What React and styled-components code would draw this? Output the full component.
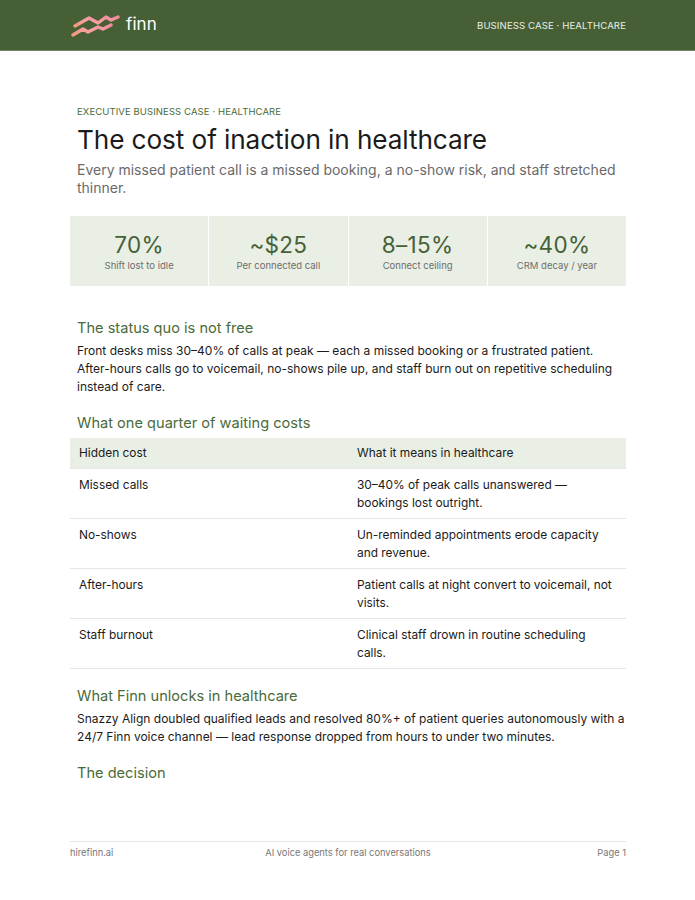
import React from "react";
import styled, { createGlobalStyle } from "styled-components";

const Global = createGlobalStyle`
  html, body { margin: 0; padding: 0; background: #fff; }
  body { font-family: Inter, "Noto Sans", sans-serif; color: #1a1a1a; -webkit-font-smoothing: antialiased; }
  * { box-sizing: border-box; }
`;

const Page = styled.div`
  width: 695px;
  height: 900px;
  display: flex;
  flex-direction: column;
  overflow: hidden;
`;

const Header = styled.header`
  height: 51px;
  background: #465f35;
  border-bottom: 1px solid #6f8662;
  display: flex;
  align-items: center;
  justify-content: space-between;
  padding: 0 69px 0 70px;
`;

const Brand = styled.div`
  display: flex;
  align-items: center;
  gap: 6px;
`;

const BrandName = styled.span`
  color: #fff;
  font-size: 17px;
  font-weight: 400;
  letter-spacing: 0.1px;
  margin-top: -2px;
`;

const HeaderTag = styled.span`
  color: #e9eee4;
  font-size: 9.6px;
  letter-spacing: 0.1px;
`;

const Main = styled.main`
  padding: 0 69px 0 70px;
  flex: 1;
  display: flex;
  flex-direction: column;
`;

const Kicker = styled.div`
  margin-top: 55px;
  padding: 0 7px;
  font-size: 9.5px;
  color: #4a6b3a;
  letter-spacing: 0.1px;
`;

const Title = styled.h1`
  margin: 6px 0 0;
  padding: 0 7px;
  font-size: 26.2px;
  font-weight: 400;
  line-height: 34px;
  color: #1b1b1b;
  letter-spacing: -0.1px;
`;

const Subtitle = styled.p`
  margin: 4px 0 0;
  padding: 0 7px;
  font-size: 14px;
  line-height: 18px;
  color: #6a6a6a;
`;

const Stats = styled.div`
  margin-top: 19px;
  display: grid;
  grid-template-columns: repeat(4, 1fr);
  gap: 1px;
`;

const Stat = styled.div`
  background: #e9efe5;
  height: 70px;
  display: flex;
  flex-direction: column;
  align-items: center;
  justify-content: center;
`;

const StatValue = styled.div`
  font-size: 22.5px;
  line-height: 26px;
  color: #466135;
  letter-spacing: 0.3px;
`;

const StatLabel = styled.div`
  font-size: 9.5px;
  color: #6d6d6d;
  margin-top: 2px;
`;

const H2 = styled.h2`
  margin: ${(p) => p.$top || 0}px 0 0;
  padding: 0 7px;
  font-size: 14.6px;
  font-weight: 400;
  line-height: 20px;
  color: #4a6b3a;
`;

const Body = styled.p`
  margin: 4px 0 0;
  padding: 0 0 0 7px;
  font-size: 12px;
  line-height: 18px;
  color: #1b1b1b;
`;

const Table = styled.div`
  margin-top: 5px;
  display: grid;
  grid-template-columns: 1fr 1fr;
`;

const Cell = styled.div`
  padding: ${(p) => (p.$head ? "6px 12px 6px 9px" : "7px 12px 6px 9px")};
  min-height: ${(p) => (p.$head ? 31 : 50)}px;
  font-size: 11.9px;
  line-height: 18px;
  color: #1b1b1b;
  background: ${(p) => (p.$head ? "#e9efe5" : "transparent")};
  border-bottom: 1px solid #e6e6e6;
`;

const Footer = styled.footer`
  margin: auto 69px 0 70px;
  border-top: 1px solid #e6e6e6;
  padding: 5px 0 0;
  height: 59px;
  display: grid;
  grid-template-columns: 1fr auto 1fr;
  font-size: 9.3px;
  color: #777;
`;

const FootRight = styled.span`
  text-align: right;
`;

const Logo = () => (
  <svg width="50" height="24" viewBox="0 0 50 24" fill="none">
    <defs>
      <linearGradient id="lg" x1="0" y1="1" x2="1" y2="0">
        <stop offset="0" stopColor="#f29a7c" />
        <stop offset="0.5" stopColor="#f6a0a4" />
        <stop offset="1" stopColor="#f08a9c" />
      </linearGradient>
    </defs>
    <path
      d="M5 13 L19 5 L28 10 L36 4 L41 7 L48 4"
      stroke="url(#lg)"
      strokeWidth="3.4"
      strokeLinecap="round"
      strokeLinejoin="round"
    />
    <path
      d="M3 22 L13 16 L18 19 L28 14 L33 16 L41 12"
      stroke="url(#lg)"
      strokeWidth="3.4"
      strokeLinecap="round"
      strokeLinejoin="round"
    />
  </svg>
);

const stats = [
  ["70%", "Shift lost to idle"],
  ["~$25", "Per connected call"],
  ["8–15%", "Connect ceiling"],
  ["~40%", "CRM decay / year"],
];

const rows = [
  ["Missed calls", "30–40% of peak calls unanswered — bookings lost outright."],
  ["No-shows", "Un-reminded appointments erode capacity and revenue."],
  ["After-hours", "Patient calls at night convert to voicemail, not visits."],
  ["Staff burnout", "Clinical staff drown in routine scheduling calls."],
];

export default function App() {
  return (
    <Page>
      <Global />
      <Header>
        <Brand>
          <Logo />
          <BrandName>finn</BrandName>
        </Brand>
        <HeaderTag>BUSINESS CASE · HEALTHCARE</HeaderTag>
      </Header>
      <Main>
        <Kicker>EXECUTIVE BUSINESS CASE · HEALTHCARE</Kicker>
        <Title>The cost of inaction in healthcare</Title>
        <Subtitle>
          Every missed patient call is a missed booking, a no-show risk, and staff stretched thinner.
        </Subtitle>
        <Stats>
          {stats.map(([v, l]) => (
            <Stat key={l}>
              <StatValue>{v}</StatValue>
              <StatLabel>{l}</StatLabel>
            </Stat>
          ))}
        </Stats>
        <H2 $top={32}>The status quo is not free</H2>
        <Body>
          Front desks miss 30–40% of calls at peak — each a missed booking or a frustrated patient.
          After-hours calls go to voicemail, no-shows pile up, and staff burn out on repetitive
          scheduling instead of care.
        </Body>
        <H2 $top={17}>What one quarter of waiting costs</H2>
        <Table>
          <Cell $head>Hidden cost</Cell>
          <Cell $head>What it means in healthcare</Cell>
          {rows.map(([a, b]) => (
            <React.Fragment key={a}>
              <Cell>{a}</Cell>
              <Cell>{b}</Cell>
            </React.Fragment>
          ))}
        </Table>
        <H2 $top={17}>What Finn unlocks in healthcare</H2>
        <Body>
          Snazzy Align doubled qualified leads and resolved 80%+ of patient queries autonomously with a
          24/7 Finn voice channel — lead response dropped from hours to under two minutes.
        </Body>
        <H2 $top={17}>The decision</H2>
      </Main>
      <Footer>
        <span>hirefinn.ai</span>
        <span>AI voice agents for real conversations</span>
        <FootRight>Page 1</FootRight>
      </Footer>
    </Page>
  );
}
